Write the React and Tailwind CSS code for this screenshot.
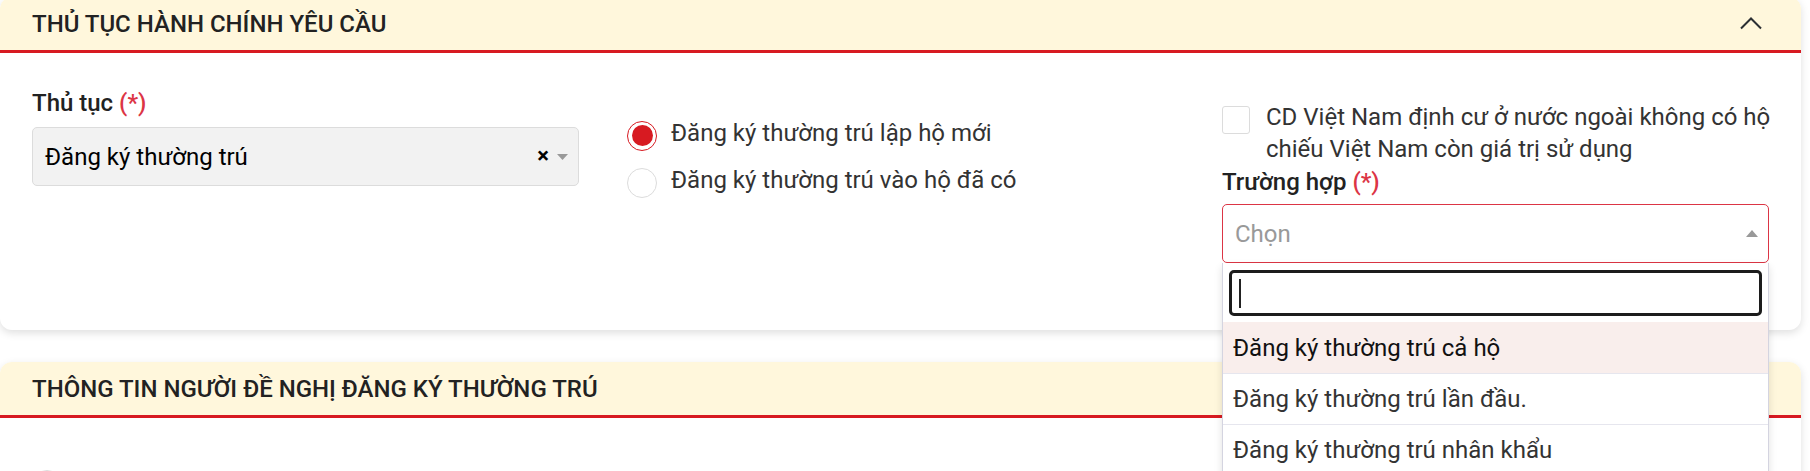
import React from "react";

function ChevronUp() {
  return (
    <svg width="24" height="14" viewBox="0 0 24 14" fill="none">
      <path d="M2 12.5 L12 2.5 L22 12.5" stroke="#2b2f33" strokeWidth="2" />
    </svg>
  );
}

function CardHeader({ title, right }) {
  return (
    <div className="h-[56px] bg-[#fff7dc] rounded-t-[12px] border-b-[3px] border-[#d71a21] px-8 flex items-center justify-between">
      <span className="text-[24px] font-medium text-[#222]">{title}</span>
      {right}
    </div>
  );
}

export default function App() {
  return (
    <div className="w-full bg-white font-['Roboto',sans-serif] text-[#212529] overflow-hidden h-[471px]">
      <div className="-mt-[3px] pr-[9px]">
        {/* Card 1 */}
        <div className="relative z-10 bg-white rounded-[12px] shadow-[0_3px_8px_rgba(0,0,0,0.13)] h-[333px]">
          <CardHeader
            title="THỦ TỤC HÀNH CHÍNH YÊU CẦU"
            right={
              <span className="mr-[6px] mt-[-1px]">
                <ChevronUp />
              </span>
            }
          />
          <div className="px-8 pt-[36px] grid grid-cols-3 gap-x-12">
            {/* Column 1 */}
            <div>
              <div className="h-[28px] leading-[28px] text-[24px] font-medium text-[#222]">
                Thủ tục <span className="text-[#dc3545]">(*)</span>
              </div>
              <div className="mt-[10px] h-[59px] bg-[#f2f2f2] border border-[#dcdcdc] rounded-[5px] flex items-center pl-[12px] pr-[10px]">
                <span className="flex-1 text-[24px] text-black">Đăng ký thường trú</span>
                <span className="text-[22px] font-bold text-black leading-none mr-[8px] -mt-[2px]">×</span>
                <svg width="11" height="6" viewBox="0 0 11 6">
                  <path d="M0 0 L11 0 L5.5 6 Z" fill="#999" />
                </svg>
              </div>
            </div>

            {/* Column 2 */}
            <div className="pt-[23px]">
              <div className="h-[47px] flex items-center gap-[14px]">
                <span className="w-[30px] h-[30px] rounded-full border border-[#d71a21] flex items-center justify-center">
                  <span className="w-[21px] h-[21px] rounded-full bg-[#d71a21]" />
                </span>
                <span className="text-[24px] text-[#333] -mt-[5px]">Đăng ký thường trú lập hộ mới</span>
              </div>
              <div className="h-[47px] flex items-center gap-[14px]">
                <span className="w-[30px] h-[30px] rounded-full border border-[#dcdcdc] bg-white" />
                <span className="text-[24px] text-[#333] -mt-[5px]">Đăng ký thường trú vào hộ đã có</span>
              </div>
            </div>

            {/* Column 3 */}
            <div className="pt-[12px]">
              <div className="flex items-start gap-[16px] -mr-[12px]">
                <span className="mt-[5px] w-[28px] h-[28px] shrink-0 rounded-[3px] border border-[#dcdcdc] bg-white" />
                <span className="text-[24px] leading-[32px] text-[#333]">
                  CD Việt Nam định cư ở nước ngoài không có hộ
                  <br />
                  chiếu Việt Nam còn giá trị sử dụng
                </span>
              </div>
              <div className="mt-[3px] h-[28px] leading-[28px] text-[24px] font-medium text-[#222]">
                Trường hợp <span className="text-[#dc3545]">(*)</span>
              </div>
              <div className="relative mt-[8px]">
                <div className="h-[59px] bg-white border border-[#dc3545] rounded-[5px] flex items-center pl-[12px] pr-[10px]">
                  <span className="flex-1 text-[24px] text-[#999]">Chọn</span>
                  <svg width="12" height="7" viewBox="0 0 12 7">
                    <path d="M0 7 L12 7 L6 0 Z" fill="#999" />
                  </svg>
                </div>
                <div className="absolute left-0 right-0 top-full z-30 bg-white border-x border-[#d4d4e0] shadow-[0_4px_8px_rgba(0,0,0,0.12)]">
                  <div className="px-[6px] pt-[7px] pb-[6px]">
                    <div className="h-[46px] border-[3px] border-[#1c1c1c] rounded-[5px] flex items-center pl-[7px]">
                      <span className="w-[2px] h-[29px] bg-[#222]" />
                    </div>
                  </div>
                  <div className="h-[51px] bg-[#f9eeec] flex items-center pl-[10px] text-[24px] text-[#111]">
                    Đăng ký thường trú cả hộ
                  </div>
                  <div className="h-[51px] border-t border-[#e6e6ee] flex items-center pl-[10px] text-[24px] text-[#333]">
                    Đăng ký thường trú lần đầu.
                  </div>
                  <div className="h-[51px] border-t border-[#e6e6ee] flex items-center pl-[10px] text-[24px] text-[#333]">
                    Đăng ký thường trú nhân khẩu
                  </div>
                  <div className="h-[51px] border-t border-[#e6e6ee] flex items-center pl-[10px] text-[24px] text-[#333]">
                    Đăng ký thường trú vào hộ
                  </div>
                </div>
              </div>
            </div>
          </div>
        </div>

        {/* Card 2 */}
        <div className="mt-[32px] bg-white rounded-[12px] shadow-[0_3px_8px_rgba(0,0,0,0.13)] h-[300px]">
          <CardHeader title="THÔNG TIN NGƯỜI ĐỀ NGHỊ ĐĂNG KÝ THƯỜNG TRÚ" />
          <div className="px-8 pt-[52px] flex items-start gap-[15px]">
            <span className="w-[30px] h-[30px] rounded-full border border-[#dcdcdc] bg-white" />
          </div>
        </div>
      </div>
    </div>
  );
}
